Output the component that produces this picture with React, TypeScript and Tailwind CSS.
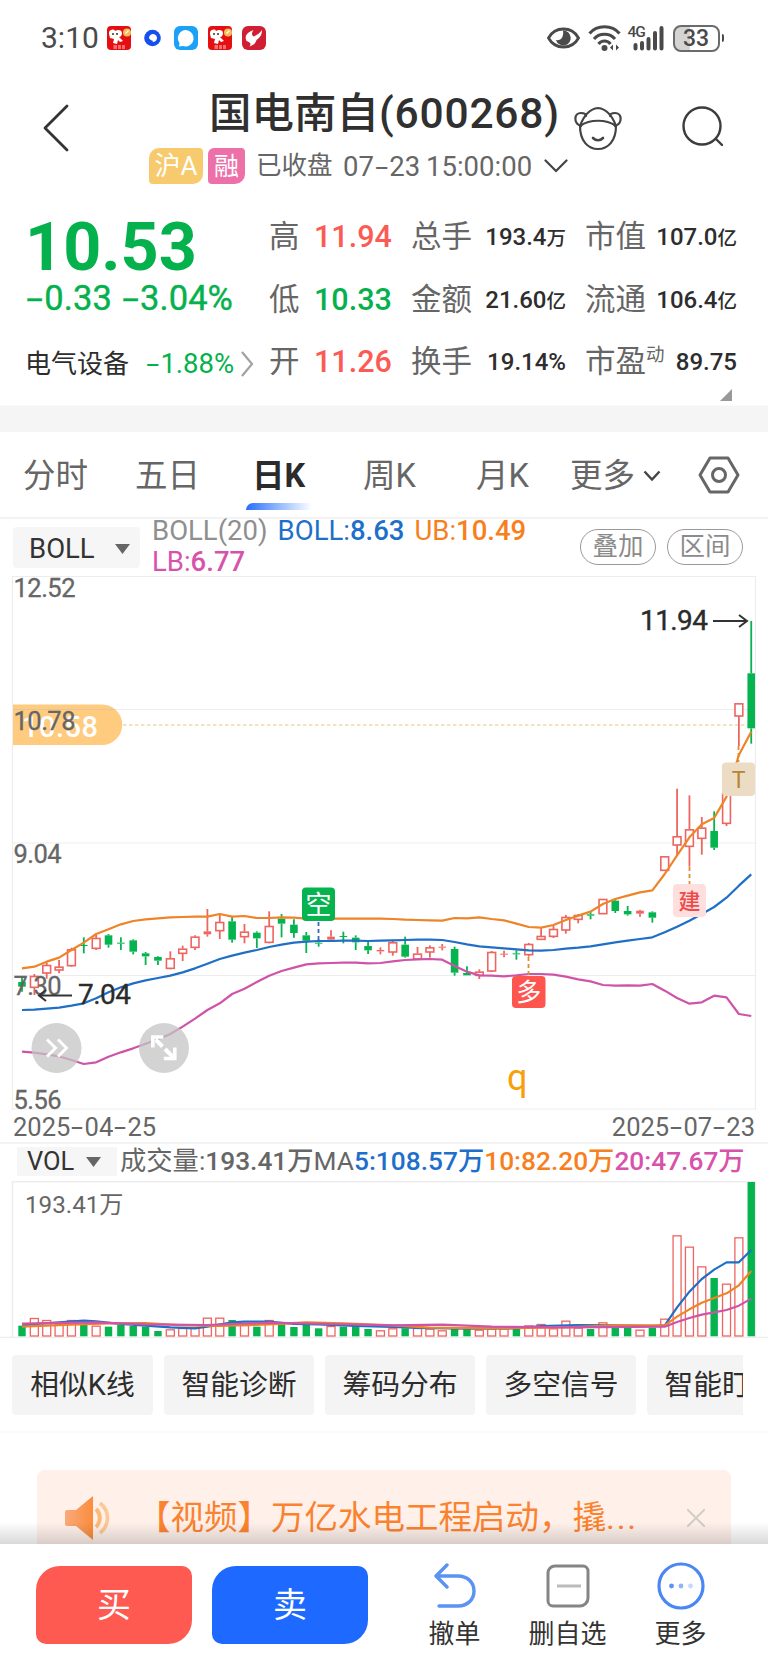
import type { ReactNode } from 'react';
import clsx from 'clsx';

type Candle = [kind: 'g' | 'r', top: number, bottom: number, high: number, low: number];

// Body top, body bottom, high and low of each day, in thirds of a pixel
const CANDLES: Candle[] = [
    ['g', 366, 380, 352, 395], ['r', 348, 382, 342, 405], ['r', 315, 339, 308, 356], ['r', 320, 330, 300, 340],
    ['r', 268, 317, 263, 320], ['g', 255, 258, 232, 280], ['r', 234, 265, 225, 270], ['g', 226, 254, 222, 263],
    ['g', 248, 251, 232, 270], ['g', 241, 275, 238, 283], ['g', 280, 289, 276, 315], ['g', 291, 302, 289, 315],
    ['r', 295, 325, 274, 328], ['r', 266, 280, 257, 303], ['r', 230, 262, 226, 270], ['r', 214, 223, 147, 230],
    ['r', 186, 212, 165, 237], ['g', 184, 239, 170, 248], ['r', 215, 230, 192, 250], ['g', 218, 235, 214, 264],
    ['r', 198, 247, 154, 250], ['g', 176, 191, 162, 232], ['g', 194, 219, 178, 233], ['g', 226, 242, 216, 279],
    ['g', 248, 251, 238, 260], ['r', 230, 239, 211, 241], ['g', 228, 231, 215, 250], ['g', 233, 247, 226, 270],
    ['g', 258, 271, 246, 282], ['r', 270, 274, 262, 283], ['r', 247, 276, 243, 287], ['g', 254, 290, 230, 293],
    ['r', 281, 297, 261, 300], ['r', 262, 276, 256, 293], ['r', 260, 263, 252, 271], ['g', 267, 338, 260, 347],
    ['g', 339, 346, 319, 346], ['r', 335, 346, 328, 357], ['r', 276, 333, 273, 336], ['r', 281, 284, 272, 292],
    ['g', 280, 283, 271, 299], ['r', 252, 284, 249, 290], ['r', 228, 238, 203, 240], ['r', 207, 229, 197, 234],
    ['r', 171, 210, 165, 221], ['r', 165, 178, 162, 190], ['g', 163, 167, 153, 178], ['r', 117, 161, 117, 161],
    ['g', 122, 153, 114, 159], ['g', 153, 163, 138, 167], ['r', 152, 161, 149, 170], ['g', 157, 173, 154, 188],
    ['r', -11, 31, -11, 31], ['r', -71, -45, -214, -15], ['r', -92, -41, -194, 20], ['r', -97, -65, -129, -16],
    ['g', -87, -37, -146, -30], ['r', -200, -110, -200, -102], ['r', -470, -432, -470, -342], ['g', -560, -395, -717, -349],
];

const UPPER = [
    325, 320, 305, 293, 270, 248, 222, 208, 193, 183, 178, 175, 172, 171, 170, 170, 162, 170, 168, 174,
    174, 172, 173, 176, 175, 176, 176, 176, 176, 176, 177, 179, 180, 181, 182, 174, 175, 172, 177, 181,
    191, 201, 203, 195, 180, 167, 155, 132, 117, 107, 97, 91, 42, -14, -68, -107, -126, -190, -315, -385,
];
const MIDDLE = [
    450, 449, 446, 443, 437, 430, 415, 397, 382, 370, 361, 354, 347, 337, 325, 311, 297, 287, 278, 270,
    261, 254, 248, 245, 243, 243, 242, 242, 243, 242, 241, 240, 239, 239, 240, 246, 253, 259, 262, 265,
    268, 271, 272, 270, 266, 263, 259, 253, 247, 242, 237, 232, 217, 200, 182, 162, 141, 113, 77, 43,
];
const LOWER = [
    575, 578, 583, 589, 600, 612, 607, 590, 577, 565, 551, 538, 522, 500, 476, 450, 430, 402, 386, 366,
    347, 333, 323, 313, 310, 309, 308, 308, 310, 309, 304, 300, 298, 297, 299, 318, 335, 346, 347, 349,
    346, 342, 342, 344, 350, 358, 364, 375, 377, 376, 377, 372, 392, 414, 431, 427, 407, 412, 462, 468,
];

const VOLUMES = [
    617, 594, 600, 612, 600, 612, 617, 620, 615, 618, 620, 633, 628, 624, 622, 593, 593, 600, 615, 620,
    600, 613, 621, 615, 625, 618, 620, 617, 627, 631, 625, 625, 624, 626, 631, 625, 626, 629, 626, 625,
    625, 616, 612, 625, 602, 623, 627, 607, 623, 623, 629, 623, 596, 346, 380, 439, 474, 491, 352, 186,
];
const VOLUME_DOWN = [0, 5, 7, 8, 9, 10, 11, 17, 19, 21, 22, 23, 24, 26, 27, 28, 31, 35, 36, 40, 46, 48, 49, 51, 56, 59];

const MA5: [number, number][] = [
    [0, 617], [1, 612], [3, 607], [5, 602], [6, 604], [8, 612], [10, 617], [12, 622], [14, 625], [15, 620],
    [17, 607], [18, 605], [20, 605], [22, 612], [24, 613], [27, 618], [30, 621], [32, 624], [36, 626], [40, 625],
    [42, 618], [45, 615], [48, 616], [51, 618], [52, 616], [53, 562], [54, 515], [55, 477], [56, 449], [57, 427],
    [58, 427], [59, 390],
];
const MA10: [number, number][] = [
    [0, 620], [4, 614], [7, 610], [10, 609], [13, 616], [16, 618], [20, 613], [23, 607], [26, 610], [30, 616],
    [33, 623], [38, 625], [44, 622], [48, 616], [52, 616], [53, 590], [54, 568], [55, 548], [56, 534], [57, 520],
    [58, 496], [59, 453],
];
const MA20: [number, number][] = [
    [0, 611], [6, 607], [10, 613], [15, 615], [20, 608], [25, 612], [30, 616], [34, 614], [38, 620], [44, 622],
    [52, 620], [53, 606], [54, 594], [55, 584], [56, 577], [57, 570], [58, 557], [59, 536],
];

const RED = '#ee6560';
const GREEN = '#05b34f';
const BLUE = '#1f6fc6';
const ORANGE = '#ee8427';
const PURPLE = '#cf54a8';

const dayX = (i: number) => 22 + i * 12.36;
const priceY = (v: number) => 284 + v / 3;
const volumeY = (v: number) => v / 3 - 61;

const pricePath = (values: number[]) => values.map((v, i) => `${dayX(i)},${priceY(v)}`).join(' ');
const volumePath = (values: [number, number][]) => values.map(([i, v]) => `${dayX(i)},${volumeY(v)}`).join(' ');

// Wide dash between digits
function Dash() {
    return <span className="inline-block w-[0.56em] text-center scale-x-[1.7]">-</span>;
}

function StockAppIcon() {
    return (
        <svg width="24" height="24" viewBox="0 0 24 24">
            <rect width="24" height="24" rx="4" fill="#e50f12" />
            <path d="M2 6c2-3 5-3 6-1 3-2 7-1 7 2 0 2-1 4-3 4l4 4-3 1-2-2-1 4-4-1 1-4-4-1-1-4z" fill="#fff" />
            <circle cx="6" cy="8" r="1" fill="#333" />
            <circle cx="10" cy="8" r="1" fill="#333" />
            <circle cx="20" cy="6.500" r="4" fill="#f4bd5c" />
            <path d="M18.500 7.500l3-3" stroke="#fff" strokeWidth="1.200" />
            <path d="M6.500 20h3.500M6.500 22h3.500M11 20h3M11 22h3M15 20h3M15 22h3" stroke="#fbd4c8" strokeWidth="1.200" />
        </svg>
    );
}

function StatusBar() {
    return (
        <div className="flex h-[76px] items-center pl-[41px] pr-[44px] text-[#4a4a4a]">
            <span className="w-[66px] text-[30px] leading-none">3:10</span>
            <div className="flex items-center gap-[10px]">
                <StockAppIcon />
                <svg width="23" height="24" viewBox="0 0 23 24">
                    <circle cx="11.500" cy="12" r="8.300" fill="#1550ef" />
                    <path d="M8.500 12a3.500 3.500 0 1 1 3.500 3.500v-1.500c-1.500 0-2.500 0-3.500-2z" fill="#fff" stroke="#fff" strokeLinejoin="round" />
                </svg>
                <svg width="24" height="24" viewBox="0 0 24 24">
                    <rect width="24" height="24" rx="6" fill="#1ba1f7" />
                    <path d="M12 4a8.200 8.200 0 1 1-3 16l-4 0.500 0.500-3.500A8.200 8.200 0 0 1 12 4z" fill="#fff" />
                </svg>
                <StockAppIcon />
                <svg width="24" height="24" viewBox="0 0 24 24">
                    <rect width="24" height="24" rx="6" fill="#d01f32" />
                    <path d="M4.500 15c-2.500-5 1-9 7-11-2 3-2 5 0 6.500 3-1 6-3 8.500-6.500 0 6-3 8-5.500 10-1 3-2 5-7 6.500 2-2.500 1-4-3-5.500z" fill="#fff" />
                </svg>
            </div>
            <div className="ml-auto flex items-center">
                <svg width="33" height="24" viewBox="0 0 33 24">
                    <path d="M1.500 12C8 0 25 0 31.500 12 25 24 8 24 1.500 12z" fill="none" stroke="#4a4a4a" strokeWidth="2.800" />
                    <path d="M16 4.500a7.500 7.500 0 1 1-7 9.500c5 1 8-3 7-9.500z" fill="#4a4a4a" />
                </svg>
                <svg className="ml-[8px]" width="33" height="26" viewBox="0 0 33 26" fill="none" stroke="#4a4a4a" strokeWidth="3">
                    <path d="M1.500 8.500C9-.500 24-.500 31.500 8.500M6 14c5-6.500 16-6.500 21 0M10.500 19c3-4 9-4 12 0" />
                    <circle cx="16.500" cy="23" r="1.500" fill="#4a4a4a" />
                    <path d="M25 19.500v6l-3-3zM28 19.500v6l3-3z" fill="#4a4a4a" stroke="none" />
                </svg>
                <div className="relative ml-[7px] h-[26px] w-[38px]">
                    <span className="absolute left-0 top-0 text-[15.500px] font-medium leading-none tracking-[-1px]">4G</span>
                    <svg width="38" height="26" viewBox="0 0 38 26" stroke="#4a4a4a" strokeWidth="4" strokeLinecap="round">
                        <path d="M7.500 20v3.500M14 18v5.500M20.500 14v9.500M27 8v15.500M33.500 3v20.500" />
                    </svg>
                </div>
                <div className="ml-[7px] flex h-[27px] w-[47px] items-center justify-center rounded-[8px] border-2 border-[#6b6b6b] bg-gradient-to-r from-[#d4d4d4] from-35% to-white to-35% text-[23px] font-medium leading-none">
                    33
                </div>
                <div className="ml-[2px] h-[8px] w-[2.500px] rounded-r bg-[#4a4a4a]" />
            </div>
        </div>
    );
}

function Header() {
    return (
        <div className="flex h-[124px] pt-[14px]">
            <svg className="ml-[42px] mt-[14px]" width="28" height="48" viewBox="0 0 28 48" fill="none" stroke="#333" strokeWidth="2.800" strokeLinecap="round" strokeLinejoin="round">
                <path d="M25 2L3 24l22 22" />
            </svg>
            <div className="ml-[79px] w-[420px]">
                <h1 className="ml-[60px] whitespace-nowrap text-[42.500px] font-medium leading-[48px] text-[#303030]">
                    国电南自<span className="tracking-[0.800px]">(600268)</span>
                </h1>
                <div className="mt-[10px] flex h-[36px] items-center text-[26px] leading-none text-[#666]">
                    <span className="flex h-[36px] w-[54px] items-center justify-center rounded-[4px] rounded-tl-[10px] rounded-br-[10px] bg-[#f8ca6e] text-[26px] text-white">沪A</span>
                    <span className="ml-[5px] flex h-[36px] w-[37px] items-center justify-center rounded-[4px] rounded-tl-[6px] rounded-br-[10px] bg-[#ed70a8] text-[25px] text-white">融</span>
                    <span className="ml-[11px] w-[87px] text-[25.500px]">已收盘</span>
                    <span className="mt-[2px] whitespace-nowrap text-[27.500px] [word-spacing:-1px]">07<Dash />23 15:00:00</span>
                    <svg className="ml-[12px] shrink-0" width="24" height="14" viewBox="0 0 24 14" fill="none" stroke="#444" strokeWidth="2.200" strokeLinecap="round">
                        <path d="M1.500 1.500L12 12 22.500 1.500" />
                    </svg>
                </div>
            </div>
            <svg className="ml-[5px] mt-[16px]" width="48" height="46" viewBox="0 0 48 46" fill="none" stroke="#444" strokeWidth="2.200" strokeLinecap="round">
                <path d="M6 20C10 9 15 3 24 2c9 1 14 7 18 18M6 20c10-7 26-7 36 0M6 20c0 15 8 23 18 23s18-8 18-23" />
                <path d="M7 20C-1 17 0 7 7 7c4 0 5 2 5 3M41 20c8-3 7-13 0-13-4 0-5 2-5 3" />
                <path d="M19 32c3 3 7 3 10 0" strokeWidth="2.600" />
            </svg>
            <svg className="ml-[60px] mt-[16px]" width="44" height="44" viewBox="0 0 44 44" fill="none" stroke="#3c3c3c" strokeWidth="2.400" strokeLinecap="round">
                <circle cx="20" cy="20" r="18.500" />
                <path d="M34 33l6 6" />
            </svg>
        </div>
    );
}

interface QuoteRowProps {
    label: string;
    value: string;
    up?: boolean;
    label2: string;
    value2: string;
    unit2?: string;
    label3: ReactNode;
    value3: string;
    unit3?: string;
}

function QuoteRow({ label, value, up = false, label2, value2, unit2, label3, value3, unit3 }: QuoteRowProps) {
    return (
        <div className="flex h-[62.500px] items-center whitespace-nowrap text-[30.500px] leading-none text-[#666]">
            <span className="w-[45px]">{label}</span>
            <span className={clsx('w-[97px] text-[30.500px] font-medium', up ? 'text-[#fb5b54]' : 'text-[#04b14c]')}>{value}</span>
            <span className="w-[62px]">{label2}</span>
            <span className="w-[93px] text-right text-[24px] font-medium text-[#2d2d2d]">{value2}{unit2 && <span className="text-[19.500px]">{unit2}</span>}</span>
            <span className="ml-[19px]">{label3}</span>
            <span className="ml-auto text-[24px] font-medium text-[#2d2d2d]">{value3}{unit3 && <span className="text-[19.500px]">{unit3}</span>}</span>
        </div>
    );
}

function Quotes() {
    return (
        <div className="flex h-[206px] border-b border-[#fafafa]">
            <div className="w-[269px] pl-[25px]">
                <div className="mt-[15px] text-[66.500px] font-bold leading-[64px] text-[#04b14c]">10.53</div>
                <div className="-mt-px whitespace-nowrap text-[34.500px] leading-[40px] tracking-[0.100px] text-[#04b14c] [-webkit-text-stroke:0.4px]">
                    <Dash />0.33 <Dash />3.04%
                </div>
                <div className="mt-[26px] flex h-[40px] items-center whitespace-nowrap leading-none">
                    <span className="w-[120px] text-[26px] text-[#2d2d2d]">电气设备</span>
                    <span className="w-[96px] text-[27.500px] text-[#04b14c]"><Dash />1.88%</span>
                    <svg width="13" height="26" viewBox="0 0 13 26" fill="none" stroke="#a2a2a2" strokeWidth="2.200">
                        <path d="M1 1l10 12L1 25" />
                    </svg>
                </div>
            </div>
            <div className="w-[468px] pt-[6px]">
                <QuoteRow label="高" value="11.94" up label2="总手" value2="193.4" unit2="万" label3="市值" value3="107.0" unit3="亿" />
                <QuoteRow label="低" value="10.33" label2="金额" value2="21.60" unit2="亿" label3="流通" value3="106.4" unit3="亿" />
                <QuoteRow
                    label="开"
                    value="11.26"
                    up
                    label2="换手"
                    value2="19.14%"
                    label3={<>市盈<span className="relative -top-[11px] text-[18.500px]">动</span></>}
                    value3="89.75"
                />
                <svg className="ml-auto mr-[5px] -mt-[5px]" width="12" height="12" viewBox="0 0 12 12">
                    <path d="M12 0v12H0z" fill="#999" />
                </svg>
            </div>
        </div>
    );
}

function Tabs() {
    return (
        <div className="flex h-[87px] items-center whitespace-nowrap border-b-2 border-[#f3f3f3] pl-[23px] pt-[3px] text-[32.500px] leading-none text-[#666]">
            <span className="w-[112px]">分时</span>
            <span className="w-[117px]">五日</span>
            <span className="relative w-[111px] font-bold text-[#2b2b2b]">
                日K
                <span className="absolute -left-[6px] top-[43px] h-[7px] w-[66px] rounded-tl-lg bg-gradient-to-r from-[#2a6bfa] to-white" />
            </span>
            <span className="w-[113px]">周K</span>
            <span className="w-[94px]">月K</span>
            <span>更多</span>
            <svg className="ml-[8px]" width="18" height="12" viewBox="0 0 18 12" fill="none" stroke="#444" strokeWidth="2.400">
                <path d="M1.500 1.500L9 9.500l7.500-8" />
            </svg>
            <svg className="ml-[37px] -mt-[3px]" width="42" height="38" viewBox="0 0 42 38" fill="none" stroke="#666" strokeWidth="3" strokeLinejoin="round">
                <path d="M12 2h18l10 17-10 17H12L2 19z" />
                <circle cx="21" cy="19" r="6.500" />
            </svg>
        </div>
    );
}

function IndicatorBar() {
    return (
        <div className="flex h-[57px] leading-none">
            <div className="ml-[13px] mt-[8px] flex h-[41px] w-[127px] items-center rounded bg-[#f6f6f6] pl-[16px] pt-[2px] text-[27.500px] text-[#333]">
                <span className="w-[86px]">BOLL</span>
                <svg width="15" height="10" viewBox="0 0 15 10"><path d="M0 0h15L7.500 10z" fill="#666" /></svg>
            </div>
            <div className="ml-[12px] w-[420px] whitespace-nowrap text-[27.500px] leading-[30.500px] -mt-[3px]">
                <div>
                    <span className="text-[#8f8f8f]">BOLL(20)</span>
                    <span className="ml-[10px] text-[#1e6fcb]">BOLL:<span className="font-medium">8.63</span></span>
                    <span className="ml-[10px] text-[#f87f1d]">UB:<span className="font-medium">10.49</span></span>
                </div>
                <div className="text-[#d753ab]">LB:<span className="font-medium">6.77</span></div>
            </div>
            <div className="ml-[8px] mt-[10px] flex gap-[11px] text-[25.500px] text-[#8b8b8b]">
                <span className="flex h-[36px] w-[76px] items-center justify-center rounded-full border-[1.500px] border-[#999]">叠加</span>
                <span className="flex h-[36px] w-[76px] items-center justify-center rounded-full border-[1.500px] border-[#999]">区间</span>
            </div>
        </div>
    );
}

function CandleShape({ candle, index }: { candle: Candle; index: number }) {
    const [kind, top, bottom, high, low] = candle;
    const x = dayX(index);
    const solid = kind === 'g' || bottom - top < 10;
    const color = kind === 'g' ? GREEN : RED;
    return (
        <g stroke={color} strokeWidth="1.800">
            {high < top && <path d={`M${x} ${priceY(high)}V${priceY(top)}`} />}
            {low > bottom && <path d={`M${x} ${priceY(bottom)}V${priceY(low)}`} />}
            {solid
                ? <rect x={x - 3.800} y={priceY(top)} width="7.600" height={(bottom - top) / 3} fill={color} stroke="none" />
                : <rect x={x - 3.900} y={priceY(top) + 0.500} width="7.800" height={(bottom - top) / 3 - 0.500} fill="#fff" strokeWidth="1.600" />}
        </g>
    );
}

function PriceChart() {
    return (
        <svg className="block" width="768" height="534" viewBox="0 0 768 534" fontSize="25.500" fill="#666">
            <g stroke="#ededf0" strokeWidth="1.200">
                <path d="M12.500 0.500H755.500M12.500 133.500H755.500M12.500 267H755.500M12.500 399.500H755.500M12.500 533H755.500" />
                <path d="M12.500 0V534M755.500 0V534" />
            </g>
            <path d="M13 128.500h89a20.200 20.200 0 0 1 0 40.500H13z" fill="#ffcb7f" />
            <path d="M13 133.500H115" stroke="#e4c69a" />
            <path d="M123 149H752" stroke="#efd9ab" strokeWidth="1.400" strokeDasharray="3.500 2.500" />
            <text x="22" y="161" fontSize="29" fontWeight="500" fill="#fff" textLength="76">10.58</text>

            {CANDLES.map((candle, i) => <CandleShape key={i} candle={candle} index={i} />)}

            <g fill="none" strokeWidth="2.200" strokeLinejoin="round">
                <polyline points={pricePath(UPPER)} stroke={ORANGE} />
                <polyline points={pricePath(MIDDLE)} stroke={BLUE} />
                <polyline points={pricePath(LOWER)} stroke={PURPLE} />
            </g>

            <g stroke="#666" strokeWidth="0.300">
                <text x="13.500" y="20.500" textLength="62">12.52</text>
                <text x="13.500" y="153.500" textLength="62">10.78</text>
                <text x="13.500" y="286.500" textLength="48">9.04</text>
                <text x="13.500" y="419" textLength="48">7.30</text>
                <text x="13.500" y="532.500" textLength="48">5.56</text>
            </g>

            {/* Highest and lowest price of the range */}
            <g fill="#2b2b2b" fontSize="28">
                <text x="640" y="53.500" textLength="68" stroke="#2b2b2b" strokeWidth="0.400">11.94</text>
                <path d="M713 45h33M739 39l8 6-8 6" fill="none" stroke="#333" strokeWidth="2" />
                <text x="78" y="427.500" textLength="53" stroke="#2b2b2b" strokeWidth="0.300">7.04</text>
                <path d="M72 419.500H39M46 414l-7 5.500 7 5.500" fill="none" stroke="#333" strokeWidth="2" />
            </g>

            {/* Signals */}
            <g strokeWidth="1.800" strokeDasharray="4 3">
                <path d="M318.500 346v18" stroke="#3f63c4" />
                <path d="M528.500 381v18M689.500 291v18M738.500 170v16" stroke="#e58a2d" />
            </g>
            <g textAnchor="middle">
                <rect x="302" y="311.500" width="33" height="33.500" rx="4" fill={GREEN} />
                <text x="318.500" y="337.500" fill="#fff" fontSize="26">空</text>
                <rect x="512" y="400" width="33.500" height="32" rx="4" fill="#ff554f" />
                <text x="528.700" y="425" fill="#fff" fontSize="25">多</text>
                <rect x="673" y="308" width="33" height="33" rx="4" fill="#ffdede" />
                <text x="689.500" y="333" fill="#ee4a4a" fontSize="22" fontWeight="500">建</text>
                <rect x="722" y="186.500" width="33" height="33.500" rx="4" fill="#ebdcc3" />
                <text x="738.500" y="212" fill="#b58434" fontSize="23">T</text>
            </g>
            <text x="507" y="514" fill="#f8a00c" fontSize="36">q</text>

            {/* Floating controls */}
            <g fill="#c4c4c4" fillOpacity="0.75">
                <circle cx="56.500" cy="472" r="25" />
                <circle cx="164" cy="472" r="25" />
            </g>
            <g fill="none" stroke="#fff" strokeWidth="3">
                <path d="M47 463.500l8.500 8.500-8.500 8.500M58 463.500l8.500 8.500-8.500 8.500" />
                <path d="M162.500 470.500l-7-7M165 473l8 8" strokeWidth="4" />
                <path d="M152.800 471.500v-10.500h10.500M174.800 471.500v11h-11" strokeWidth="3.600" />
            </g>
        </svg>
    );
}

function VolumeChart() {
    return (
        <>
            <div className="flex h-[39px] items-center whitespace-nowrap border-t-2 border-[#f3f3f3] pb-[2px] pl-[17px] text-[26.300px] leading-none text-[#666]">
                <div className="flex h-[29px] w-[100px] items-center bg-[#f6f6f6] pl-[10px] text-[25.500px] text-[#333]">
                    <span className="w-[59px]">VOL</span>
                    <svg width="15" height="10" viewBox="0 0 15 10"><path d="M0 0h15L7.500 10z" fill="#666" /></svg>
                </div>
                <span className="ml-[3px]">成交量:<span className="font-medium">193.41万</span>MA</span>
                <span className="font-medium text-[#1e6fcb]">5:108.57万</span>
                <span className="font-medium text-[#f87f1d]">10:82.20万</span>
                <span className="font-medium text-[#d753ab]">20:47.67万</span>
            </div>
            <svg className="block" width="768" height="157" viewBox="0 0 768 157">
                <path d="M12.500 0.700H755.500M12.500 0V156M755.500 0V156" fill="none" stroke="#ededf0" strokeWidth="1.500" />
                <path d="M0 156.300H768" stroke="#e9e9ec" />
                {VOLUMES.map((v, i) => {
                    const down = VOLUME_DOWN.includes(i);
                    const y = volumeY(v);
                    return down
                        ? <rect key={i} x={dayX(i) - 3.700} y={y} width="7.400" height={155.300 - y} fill={GREEN} />
                        : <rect key={i} x={dayX(i) - 4} y={y + 0.500} width="8" height={154.500 - y} fill="#fff" stroke={RED} strokeWidth="1.300" />;
                })}
                <g fill="none" strokeWidth="2.200" strokeLinejoin="round">
                    <polyline points={volumePath(MA5)} stroke={BLUE} />
                    <polyline points={volumePath(MA10)} stroke={ORANGE} />
                    <polyline points={volumePath(MA20)} stroke={PURPLE} />
                </g>
                <text x="25" y="32" fontSize="24.200" fill="#666">193.41万</text>
            </svg>
        </>
    );
}

function Tools() {
    return (
        <div className="h-[95px] border-b-2 border-[#fafafa] pl-[12px] pr-[25px] pt-[17px]">
            <div className="flex gap-[11px] overflow-hidden whitespace-nowrap text-[28.800px] leading-none text-[#2d2d2d]">
                <span className="flex h-[60px] w-[141px] shrink-0 items-center justify-center rounded bg-[#f4f4f4]">相似K线</span>
                {['智能诊断', '筹码分布', '多空信号', '智能盯盘'].map((name) => (
                    <span key={name} className="flex h-[60px] w-[150px] shrink-0 items-center justify-center rounded bg-[#f4f4f4]">{name}</span>
                ))}
            </div>
        </div>
    );
}

function NewsBanner() {
    return (
        <div className="relative h-[111px] overflow-hidden px-[37px] pt-[37px]">
            <div className="flex h-[96px] items-center rounded-t-lg bg-[#fff0ea] pl-[28px] text-[33.500px] leading-none text-[#fb8330]">
                <svg width="46" height="44" viewBox="0 0 46 44">
                    <defs>
                        <linearGradient id="horn" x1="0" y1="0" x2="1" y2="0">
                            <stop offset="0" stopColor="#fba97b" />
                            <stop offset="1" stopColor="#fb8c3c" />
                        </linearGradient>
                    </defs>
                    <path d="M2 14h9L28 0v44L11 30H2a2 2 0 0 1-2-2V16a2 2 0 0 1 2-2z" fill="url(#horn)" />
                    <path d="M31 13c5 5 5 13 0 18" fill="none" stroke="#fdb877" strokeWidth="4" />
                    <path d="M35 7c10 8 10 22 0 30" fill="none" stroke="#fdc796" strokeWidth="3.600" />
                </svg>
                <span className="ml-[26px] w-[510px] whitespace-nowrap">【视频】万亿水电工程启动，撬<span className="tracking-[1.800px]">...</span></span>
                <svg className="ml-[40px]" width="18" height="18" viewBox="0 0 18 18" stroke="#cfcfc6" strokeWidth="2">
                    <path d="M0 0l18 18M18 0L0 18" />
                </svg>
            </div>
            <div className="absolute inset-x-0 bottom-0 h-[22px] bg-gradient-to-b from-transparent to-black/15" />
        </div>
    );
}

function BottomAction({ label, children }: { label: string; children: ReactNode }) {
    return (
        <div className="flex w-[113px] flex-col items-center text-[26px] leading-none text-[#333]">
            <div className="flex h-[48px] items-center">{children}</div>
            <span className="mt-[11px] whitespace-nowrap">{label}</span>
        </div>
    );
}

function BottomBar() {
    return (
        <div className="flex h-[120px] bg-white pl-[36px] pt-[22px] text-[34px] leading-none text-white">
            <button className="h-[78px] w-[156px] rounded-[10px] rounded-tl-[24px] rounded-br-[24px] bg-[#ff5a52]">买</button>
            <button className="ml-[20px] h-[78px] w-[156px] rounded-[10px] rounded-tl-[24px] rounded-br-[24px] bg-[#1e69ff]">卖</button>
            <div className="ml-[30px] -mt-[4px] flex">
                <BottomAction label="撤单">
                    <svg width="42" height="46" viewBox="0 0 42 46" fill="none" stroke="#5b93f2" strokeWidth="3.400" strokeLinecap="round" strokeLinejoin="round">
                        <path d="M13 2L2 13l11 11M2 13h22c9 0 16 6 16 15s-7 15-16 15H5" />
                    </svg>
                </BottomAction>
                <BottomAction label="删自选">
                    <svg width="44" height="44" viewBox="0 0 44 44" fill="none" stroke="#858585" strokeWidth="3">
                        <path d="M9 2h28a5 5 0 0 1 5 5v27a8 8 0 0 1-8 8H7a5 5 0 0 1-5-5V9a7 7 0 0 1 7-7z" />
                        <path d="M11 22h24" stroke="#bbb" />
                    </svg>
                </BottomAction>
                <BottomAction label="更多">
                    <svg width="48" height="48" viewBox="0 0 48 48" fill="none" stroke="#4a87f5" strokeWidth="3.200">
                        <circle cx="24" cy="24" r="22" />
                        <g stroke="none">
                            <circle cx="14.500" cy="24" r="2.400" fill="#5b93f2" />
                            <circle cx="24" cy="24" r="2.400" fill="#8fb5f8" />
                            <circle cx="33.500" cy="24" r="2.400" fill="#c5d9fc" />
                        </g>
                    </svg>
                </BottomAction>
            </div>
        </div>
    );
}

export default function App() {
    return (
        <div className="h-[1664px] w-[768px] overflow-hidden bg-white font-['Roboto','Noto_Sans_CJK_SC',sans-serif]">
            <StatusBar />
            <Header />
            <Quotes />
            <div className="h-[26px] bg-[#f5f5f5]" />
            <Tabs />
            <IndicatorBar />
            <PriceChart />
            <div className="flex h-[32px] items-center justify-between pl-[13px] pr-[13px] pt-[3px] text-[25.500px] leading-none text-[#666]">
                <span>2025<Dash />04<Dash />25</span>
                <span>2025<Dash />07<Dash />23</span>
            </div>
            <VolumeChart />
            <Tools />
            <NewsBanner />
            <BottomBar />
        </div>
    );
}
